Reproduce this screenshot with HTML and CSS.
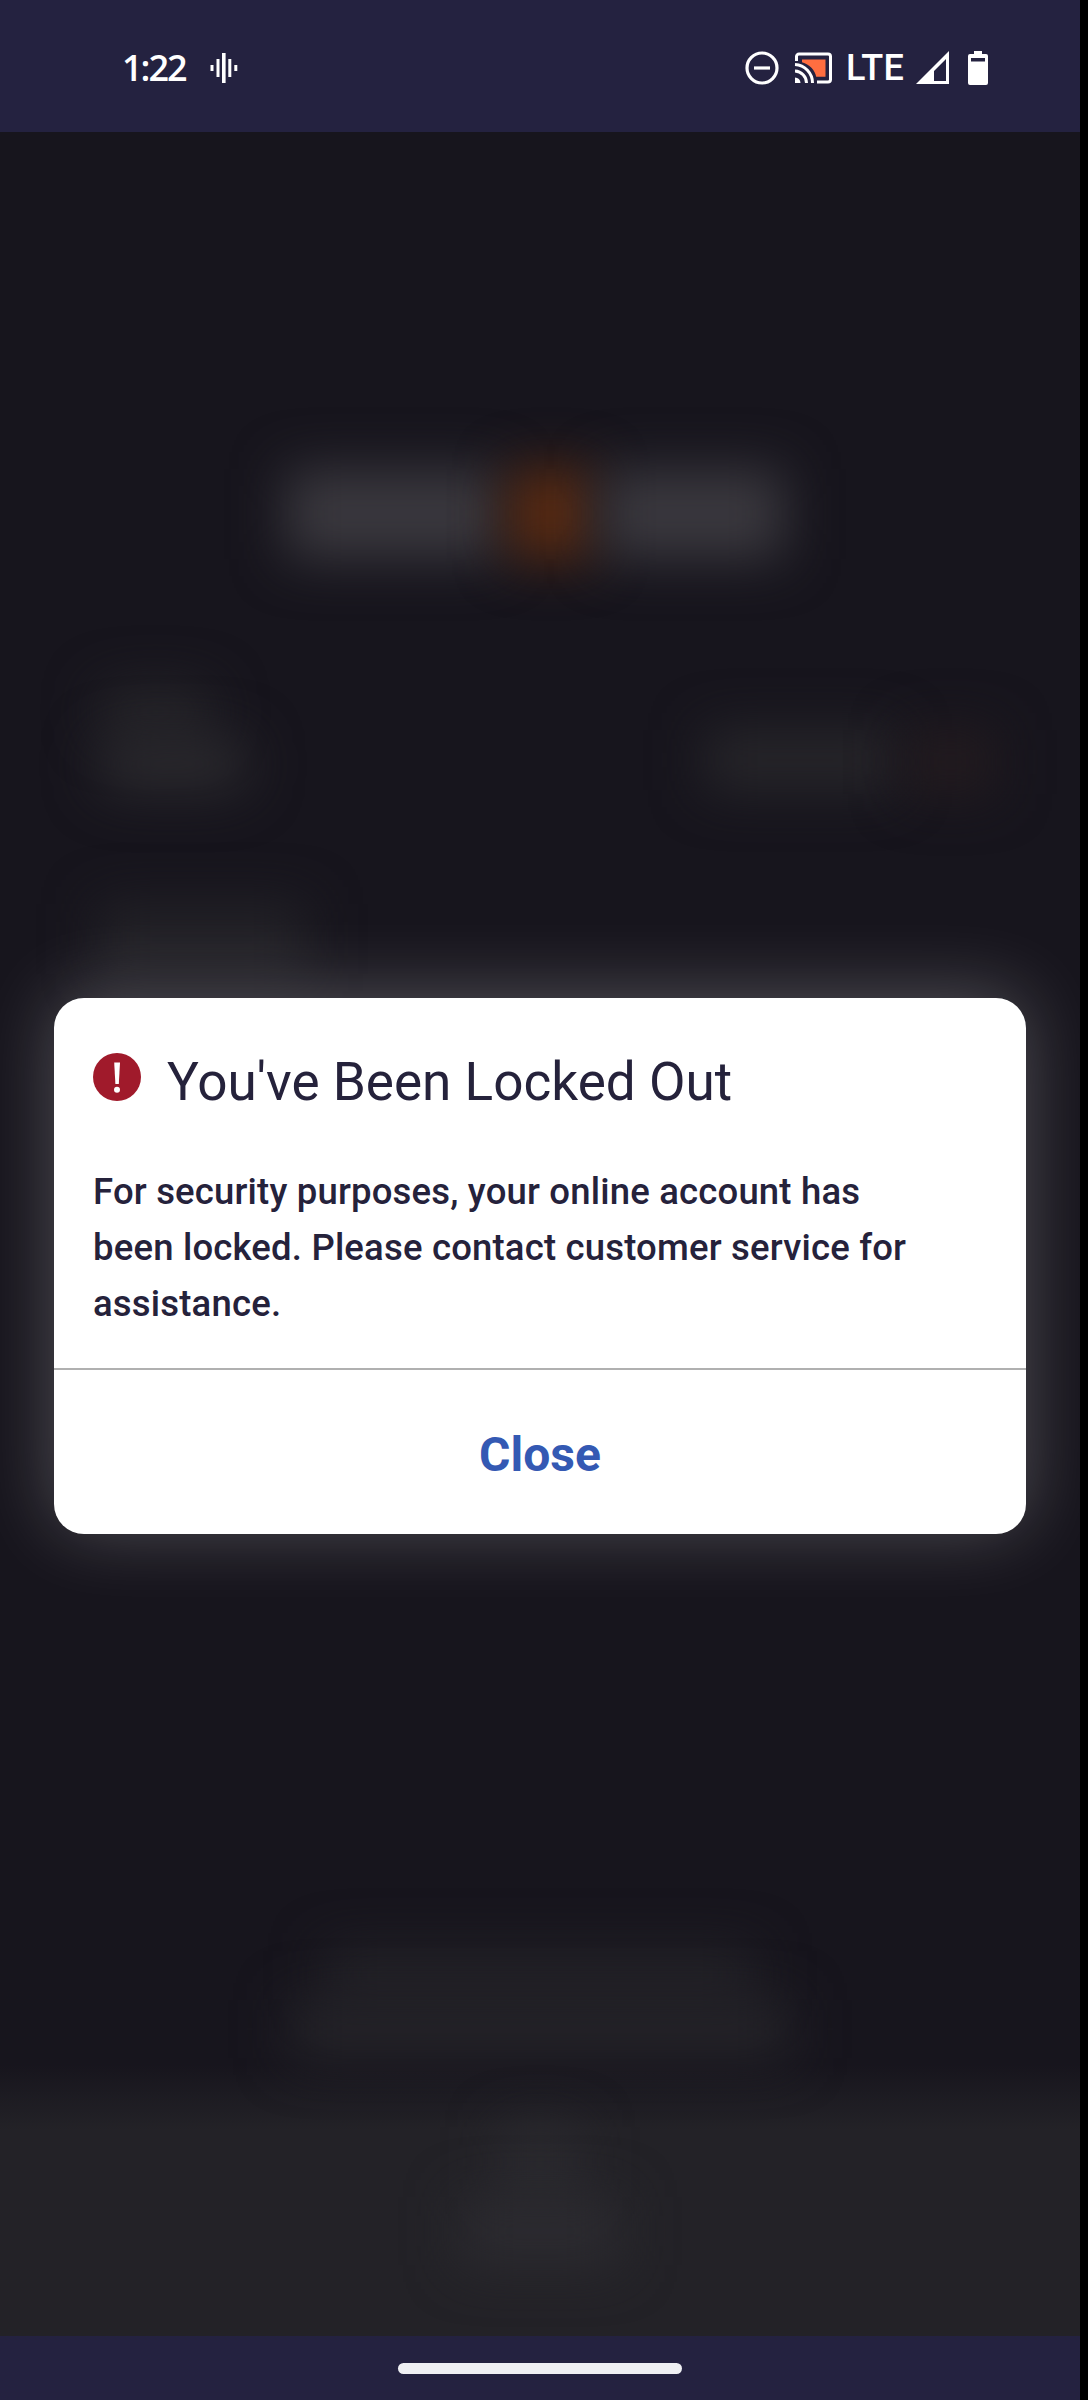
FILE: index.html
```html
<!DOCTYPE html>
<html lang="en">
<head>
<meta charset="utf-8">
<title>You've Been Locked Out</title>
<link rel="stylesheet" href="styles.css">
</head>
<body>
<div class="screen">
  <header class="status-bar">
    <div class="status-left">
      <span class="clock">1:22</span>
      <svg class="wave" width="28" height="30" viewBox="0 0 28 30" fill="#fff"><rect x="0.5" y="12" width="3" height="6"/><rect x="6.5" y="6" width="3" height="18"/><rect x="12" y="0" width="3.6" height="30"/><rect x="18.3" y="6" width="3" height="18"/><rect x="24.3" y="12" width="3" height="6"/></svg>
    </div>
    <div class="status-right">
      <svg class="dnd" width="34" height="34" viewBox="0 0 34 34" fill="none" stroke="#fff" stroke-width="3.2"><circle cx="17" cy="17" r="15"/><path d="M9 17h16"/></svg>
      <svg class="cast" width="38" height="32" viewBox="0 0 38 32" fill="none" stroke="#fff" stroke-width="3"><path d="M8 7.5h23.5v17.3h-9.3C21 18 15.500 12.300 8 10.200z" fill="#ff6e40" stroke="none"/><path d="M2.500 9V4.500a2.500 2.500 0 0 1 2.500-2.500h29a2.500 2.500 0 0 1 2.500 2.500v23a2.500 2.500 0 0 1-2.500 2.500H23"/><path d="M1 12.500A18.500 18.500 0 0 1 18.500 31M1 19a12 12 0 0 1 11.500 12"/><path d="M1 25.500a5.500 5.500 0 0 1 5.500 5.500H1z" fill="#fff" stroke="none"/></svg>
      <span class="network">LTE</span>
      <svg class="signal" width="33" height="33" viewBox="0 0 33 33"><path fill="#fff" fill-rule="evenodd" d="M33 0v33H0zM30 8L18 20v10h12z"/></svg>
      <svg class="battery" width="20" height="34" viewBox="0 0 20 34"><path fill="#fff" fill-rule="evenodd" d="M6 0h8v3h4a2 2 0 0 1 2 2v27a2 2 0 0 1-2 2H2a2 2 0 0 1-2-2V5a2 2 0 0 1 2-2h4zM3 7v3.500h14V7z"/></svg>
    </div>
  </header>

  <main class="app">
    <div class="backdrop" aria-hidden="true">
      <div class="brand"><i class="brand-part"></i><i class="brand-dot"></i><i class="brand-part brand-end"></i></div>
      <div class="fields">
        <div class="field-text"><i class="line-short"></i><i class="line-long"></i></div>
        <div class="toggle"><i class="toggle-label"></i><i class="toggle-knob"></i></div>
      </div>
      <i class="password"></i>
      <div class="links"><i class="link-top"></i><i class="link-bottom"></i></div>
      <div class="footer"><i class="footer-icon"></i><i class="footer-label"></i></div>
    </div>

    <section class="dialog" role="alertdialog" aria-labelledby="dialog-title">
      <div class="dialog-body">
        <div class="dialog-head">
          <svg class="alert" width="48" height="48" viewBox="0 0 48 48"><circle cx="24" cy="24" r="24" fill="#a01a2b"/><path d="M21.200 9.500h5.800l-1.200 21.500h-3.400z" fill="#fff"/><circle cx="24" cy="36.800" r="3" fill="#fff"/></svg>
          <h1 class="title" id="dialog-title">You've Been Locked Out</h1>
        </div>
        <p class="message">For security purposes, your online account has<br>been locked. Please contact customer service for<br>assistance.</p>
      </div>
      <button class="close" type="button">Close</button>
    </section>
  </main>

  <footer class="nav-bar"><div class="handle"></div></footer>
</div>
</body>
</html>
```
FILE: styles.css
```css
* { box-sizing: border-box; }
body { margin: 0; background: #000; font-family: Roboto, "Liberation Sans", sans-serif; }
.screen { width: 1080px; height: 2400px; display: flex; flex-direction: column; overflow: hidden; background: #17151d; }
svg { display: block; flex: none; }

.status-bar { height: 132px; padding: 0 92px 0 122px; display: flex; justify-content: space-between; background: #242240; color: #fff; }
.status-left, .status-right { display: flex; height: 135px; align-items: center; }
.clock { width: 64px; font: 600 36px/36px "Open Sans", sans-serif; letter-spacing: -2px; white-space: nowrap; }
.wave { margin-left: 24px; }
.dnd { margin-right: 15px; }
.cast { margin-right: 14px; }
.network { width: 62px; font-size: 36px; line-height: 36px; font-weight: 500; letter-spacing: .3px; }
.signal { margin: 0 19px 0 8px; }

.app { flex: 1; display: grid; overflow: hidden; }
.app > * { grid-area: 1 / 1; }
.backdrop { display: flex; flex-direction: column; height: 2204px; }
.backdrop i { display: block; filter: blur(26px); }
.brand { display: flex; gap: 8px; margin: 337px 0 0 286px; height: 90px; }
.brand-part { width: 215px; background: #3a383e; }
.brand-end { width: 183px; }
.brand-dot { width: 84px; background: #5a2b12; }
.fields { display: flex; justify-content: space-between; margin-top: 128px; padding: 0 85px 0 98px; height: 118px; }
.line-short { width: 115px; height: 50px; background: #262529; border-radius: 20px; }
.line-long { width: 150px; height: 54px; background: #2b2a2e; border-radius: 20px; }
.toggle { display: flex; gap: 10px; padding-top: 43px; }
.toggle-label { width: 190px; height: 60px; background: #27262a; }
.toggle-knob { width: 90px; height: 64px; background: #231b1f; }
.password { width: 208px; height: 70px; margin: 99px 0 0 98px; background: #232227; }
.links { display: flex; flex-direction: column; align-items: center; margin-top: 976px; height: 115px; }
.link-top { width: 430px; height: 50px; background: #242328; }
.link-bottom { width: 500px; height: 58px; background: #252429; }
.footer { flex: 1; display: flex; flex-direction: column; align-items: center; padding-top: 62px; background: linear-gradient(#17151d00, #232227 65px); }
.footer-icon { width: 76px; height: 70px; background: #2b2a2f; }
.footer-label { width: 160px; height: 68px; background: #2c2b30; }

.dialog { position: relative; width: 972px; height: 536px; margin: 866px 0 0 54px; background: #fff; border-radius: 30px; box-shadow: 0 -5px 74px 0 rgba(255, 255, 255, .25); color: #25223b; display: flex; flex-direction: column; }
.dialog-body { height: 372px; padding: 55px 39px 0; border-bottom: 2px solid #b0b0b0; }
.dialog-head { display: flex; gap: 26px; }
.title { margin: -3px 0 0; font-size: 53.1px; line-height: 64px; font-weight: 400; white-space: nowrap; }
.message { margin: 50px 0 0; font-size: 36.500px; line-height: 56px; font-weight: 500; letter-spacing: .18px; white-space: nowrap; }
.close { flex: 1; border: 0; padding: 5px 0 0; background: none; font: 700 48px/56px Roboto, sans-serif; color: #3459b3; }

.nav-bar { height: 64px; display: flex; justify-content: center; padding-top: 27px; background: #242240; }
.handle { width: 284px; height: 11px; border-radius: 6px; background: #eff0f3; }
```
